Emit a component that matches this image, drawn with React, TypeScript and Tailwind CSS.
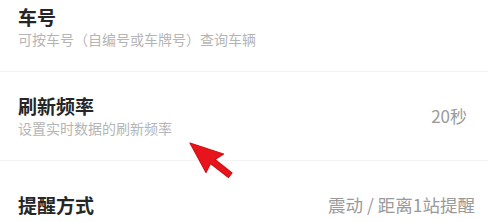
import React from "react";

const font = { fontFamily: '"Noto Sans CJK SC", "Noto Sans", sans-serif' };

export default function App() {
  return (
    <div className="relative w-[488px] h-[222px] overflow-hidden bg-white" style={font}>
      <div className="-mt-[17px] flex flex-col">
        <div className="flex items-center justify-between h-[88px] pl-[18px]">
          <div className="flex flex-col">
            <div className="text-[19px] leading-[24px] font-bold text-[#262626]">车号</div>
            <div className="text-[14px] leading-[20px] text-[#b5b5b5]">可按车号（自编号或车牌号）查询车辆</div>
          </div>
        </div>
        <div className="h-px bg-[#f3f3f3]" />
        <div className="flex items-center justify-between h-[88px] pl-[18px] pr-[21px]">
          <div className="flex flex-col">
            <div className="text-[19px] leading-[24px] font-bold text-[#262626]">刷新频率</div>
            <div className="text-[14px] leading-[20px] text-[#b5b5b5]">设置实时数据的刷新频率</div>
          </div>
          <div className="text-[17px] leading-[24px] text-[#9a9a9a]">20秒</div>
        </div>
        <div className="h-px bg-[#f3f3f3]" />
        <div className="flex items-center justify-between h-[88px] pl-[18px] pr-[13px]">
          <div className="text-[19px] leading-[24px] font-bold text-[#262626]">提醒方式</div>
          <div className="text-[17.5px] leading-[24px] text-[#9a9a9a]">震动 / 距离1站提醒</div>
        </div>
      </div>
      <svg
        className="absolute left-[185px] top-[138px]"
        width="52"
        height="44"
        viewBox="0 0 52 44"
      >
        <polygon
          points="5,5 38.5,16 30,21.5 47,35 43.5,39.5 25.5,25.5 21,34.5"
          fill="#e8141b"
          stroke="#d10f16"
          strokeWidth="1.2"
          strokeLinejoin="round"
        />
      </svg>
    </div>
  );
}
